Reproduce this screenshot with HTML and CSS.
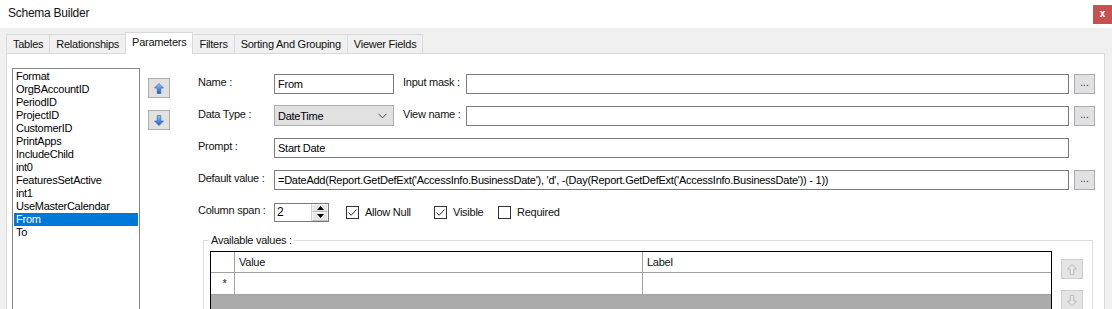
FILE: index.html
```html
<!DOCTYPE html>
<html lang="en">
  <head>
    <meta charset="UTF-8" />
    <title>Schema Builder</title>
    <link rel="stylesheet" href="styles.css">
  </head>
  <body>
    <div class="titlebar">
      <span class="title">Schema Builder</span>
      <div class="close">x</div>
    </div>

    <div class="window">
      <div class="tabs">
        <div class="tab">Tables</div>
        <div class="tab">Relationships</div>
        <div class="tab active">Parameters</div>
        <div class="tab">Filters</div>
        <div class="tab">Sorting And Grouping</div>
        <div class="tab">Viewer Fields</div>
      </div>

      <div class="panel">
        <ul class="listbox">
          <li>Format</li>
          <li>OrgBAccountID</li>
          <li>PeriodID</li>
          <li>ProjectID</li>
          <li>CustomerID</li>
          <li>PrintApps</li>
          <li>IncludeChild</li>
          <li>int0</li>
          <li>FeaturesSetActive</li>
          <li>int1</li>
          <li>UseMasterCalendar</li>
          <li class="selected">From</li>
          <li>To</li>
        </ul>

        <div class="move-buttons">
          <div class="icon-btn">
            <svg width="10" height="11" viewBox="0 0 10 11">
              <defs>
                <linearGradient id="blueUp" x1="0" y1="0" x2="0" y2="1">
                  <stop offset="0" stop-color="#8fc3f5" />
                  <stop offset="1" stop-color="#1f5fc4" />
                </linearGradient>
              </defs>
              <polygon points="5,0.5 9.5,5 6.8,5 6.8,10.5 3.2,10.5 3.2,5 0.5,5" fill="url(#blueUp)" stroke="#2a5fae" stroke-width="0.6" />
            </svg>
          </div>
          <div class="icon-btn">
            <svg width="10" height="11" viewBox="0 0 10 11">
              <defs>
                <linearGradient id="blueDown" x1="0" y1="0" x2="0" y2="1">
                  <stop offset="0" stop-color="#8fc3f5" />
                  <stop offset="1" stop-color="#1f5fc4" />
                </linearGradient>
              </defs>
              <polygon points="3.2,0.5 6.8,0.5 6.8,6 9.5,6 5,10.5 0.5,6 3.2,6" fill="url(#blueDown)" stroke="#2a5fae" stroke-width="0.6" />
            </svg>
          </div>
        </div>

        <div class="form">
          <div class="row">
            <span class="lbl">Name :</span>
            <div class="field short">From</div>
            <span class="lbl2">Input mask :</span>
            <div class="field grow"></div>
            <div class="dots">...</div>
          </div>

          <div class="row">
            <span class="lbl">Data Type :</span>
            <div class="select">
              <span>DateTime</span>
              <svg width="9" height="6" viewBox="0 0 9 6"><polyline points="0.5,0.8 4.5,4.8 8.5,0.8" fill="none" stroke="#444" stroke-width="1" /></svg>
            </div>
            <span class="lbl2">View name :</span>
            <div class="field grow"></div>
            <div class="dots">...</div>
          </div>

          <div class="row">
            <span class="lbl">Prompt :</span>
            <div class="field grow wide">Start Date</div>
          </div>

          <div class="row">
            <span class="lbl">Default value :</span>
            <div class="field grow">=DateAdd(Report.GetDefExt('AccessInfo.BusinessDate'), 'd', -(Day(Report.GetDefExt('AccessInfo.BusinessDate')) - 1))</div>
            <div class="dots">...</div>
          </div>

          <div class="row">
            <span class="lbl">Column span :</span>
            <div class="spinner">
              <span class="spin-value">2</span>
              <div class="spin-buttons">
                <div class="spin-half"><svg width="7" height="4" viewBox="0 0 7 4"><polygon points="3.5,0 7,4 0,4" fill="#000" /></svg></div>
                <div class="spin-half"><svg width="7" height="4" viewBox="0 0 7 4"><polygon points="0,0 7,0 3.5,4" fill="#000" /></svg></div>
              </div>
            </div>
            <label class="check allow-null">
              <span class="box"><svg width="11" height="11" viewBox="0 0 11 11"><polyline points="1.5,5.5 4.2,8.2 9.5,2.5" fill="none" stroke="#222" stroke-width="1" /></svg></span>
              Allow Null
            </label>
            <label class="check visible">
              <span class="box"><svg width="11" height="11" viewBox="0 0 11 11"><polyline points="1.5,5.5 4.2,8.2 9.5,2.5" fill="none" stroke="#222" stroke-width="1" /></svg></span>
              Visible
            </label>
            <label class="check">
              <span class="box"></span>
              Required
            </label>
          </div>

          <fieldset class="group">
            <legend>Available values :</legend>
            <div class="group-body">
              <div class="grid">
                <div class="grid-row head">
                  <div class="cell rowhead"></div>
                  <div class="cell value">Value</div>
                  <div class="cell label">Label</div>
                </div>
                <div class="grid-row">
                  <div class="cell rowhead"><span class="star">*</span></div>
                  <div class="cell value"></div>
                  <div class="cell label"></div>
                </div>
              </div>
              <div class="side-buttons">
                <div class="icon-btn disabled">
                  <svg width="10" height="11" viewBox="0 0 10 11"><polygon points="5,0.5 9.5,5 6.8,5 6.8,10.5 3.2,10.5 3.2,5 0.5,5" fill="#e8e8e8" stroke="#a8a8a8" stroke-width="0.7" /></svg>
                </div>
                <div class="icon-btn disabled">
                  <svg width="10" height="11" viewBox="0 0 10 11"><polygon points="3.2,0.5 6.8,0.5 6.8,6 9.5,6 5,10.5 0.5,6 3.2,6" fill="#e8e8e8" stroke="#a8a8a8" stroke-width="0.7" /></svg>
                </div>
              </div>
            </div>
          </fieldset>
        </div>
      </div>
    </div>
  </body>
</html>
```

FILE: styles.css
```css
body {
  margin: 0;
  background-color: #f0f0f0;
  color: #000;
  font-family: "Liberation Sans", Arial, sans-serif;
  font-size: 11px;
  letter-spacing: -0.25px;
  height: 309px;
  overflow: hidden;
}

.titlebar {
  height: 28px;
  background: #fff;
  display: flex;
  justify-content: space-between;
  align-items: flex-start;
}

.title {
  font-size: 12px;
  line-height: 15px;
  padding: 6px 0 0 8px;
  color: #111;
}

.close {
  width: 19px;
  height: 19px;
  margin-top: 5px;
  background: #c75050;
  color: #fff;
  font-family: "DejaVu Sans Mono", monospace;
  font-weight: bold;
  font-size: 10px;
  line-height: 18px;
  text-align: center;
  letter-spacing: 0;
}

.window {
  padding: 4px 7px 0 6px;
}

.tabs {
  display: flex;
  align-items: flex-end;
  height: 21px;
}

.tab {
  height: 18px;
  line-height: 19px;
  padding: 0 6px;
  border: 1px solid #d9d9d9;
  border-bottom: 0;
  margin-left: -1px;
  background: #f0f0f0;
  color: #111;
}

.tab:first-child {
  margin-left: 0;
}

.tab.active {
  height: 21px;
  line-height: 18px;
  background: #fff;
  position: relative;
  z-index: 1;
  margin-bottom: -1px;
}

.panel {
  background: #fff;
  border: 1px solid #d9d9d9;
  height: 300px;
  display: flex;
  align-items: flex-start;
}

.listbox {
  list-style: none;
  width: 126px;
  height: 260px;
  margin: 14px 0 0 5px;
  padding: 1px 0;
  border: 1px solid #828790;
}

.listbox li {
  height: 13px;
  line-height: 13px;
  margin: 0 1px;
  padding-left: 2px;
}

.listbox li.selected {
  background: #0078d7;
  color: #fff;
}

.move-buttons {
  display: flex;
  flex-direction: column;
  gap: 12px;
  margin: 24px 0 0 8px;
}

.icon-btn {
  width: 20px;
  height: 18px;
  background: #e1e1e1;
  border: 1px solid #adadad;
  display: flex;
  align-items: center;
  justify-content: center;
}

.icon-btn.disabled {
  background: #e4e4e4;
  border-color: #cdcdcd;
}

.form {
  width: 897px;
  margin: 20px 0 0 28px;
}

.row {
  display: flex;
  align-items: center;
  height: 20px;
  margin-bottom: 12px;
}

.lbl {
  width: 76px;
  flex: none;
  align-self: flex-start;
  line-height: 13px;
  padding-top: 2px;
  color: #111;
}

.lbl2 {
  width: 63px;
  flex: none;
  margin-left: 9px;
  align-self: flex-start;
  line-height: 13px;
  padding-top: 2px;
  color: #111;
}

.field {
  height: 20px;
  box-sizing: border-box;
  border: 1px solid #7a7a7a;
  background: #fff;
  padding: 0 3px;
  line-height: 18px;
  white-space: nowrap;
  overflow: hidden;
}

.field.short {
  width: 120px;
  flex: none;
}

.field.grow {
  flex: 1;
}

.field.wide {
  margin-right: 26px;
}

.dots {
  width: 21px;
  height: 20px;
  box-sizing: border-box;
  margin-left: 5px;
  background: #e1e1e1;
  border: 1px solid #adadad;
  text-align: center;
  line-height: 16px;
  font-size: 10px;
  letter-spacing: 0;
  color: #302060;
}

.select {
  width: 120px;
  height: 21px;
  box-sizing: border-box;
  flex: none;
  background: #e1e1e1;
  border: 1px solid #adadad;
  display: flex;
  align-items: center;
  justify-content: space-between;
  padding: 0 6px 0 3px;
  margin-top: -1px;
}

.spinner {
  width: 55px;
  height: 19px;
  box-sizing: border-box;
  border: 1px solid #7a7a7a;
  display: flex;
  justify-content: space-between;
}

.spin-value {
  padding-left: 2px;
  line-height: 17px;
  font-size: 12px;
}

.spin-buttons {
  width: 16px;
  display: flex;
  flex-direction: column;
  border-left: 1px solid #d0d0d0;
}

.spin-half {
  flex: 1;
  background: #e6e6e6;
  border: 1px solid #f4f4f4;
  border-bottom-color: #bcbcbc;
  display: flex;
  align-items: center;
  justify-content: center;
}

.check {
  display: flex;
  align-items: center;
  gap: 6px;
  color: #111;
}

.check.allow-null {
  width: 88px;
  margin-left: 17px;
}

.check.visible {
  width: 64px;
}

.box {
  width: 13px;
  height: 13px;
  box-sizing: border-box;
  border: 1px solid #333;
  background: #fff;
  display: flex;
  align-items: center;
  justify-content: center;
}

.group {
  width: 890px;
  box-sizing: border-box;
  margin: 12px 0 0 5px;
  padding: 0;
  border: 1px solid #dcdcdc;
}

.group legend {
  margin-left: 5px;
  padding: 0 2px;
  line-height: 13px;
  color: #111;
}

.group-body {
  display: flex;
  gap: 9px;
  padding: 4px 0 0 6px;
}

.grid {
  width: 842px;
  height: 80px;
  box-sizing: border-box;
  border: 1px solid #000;
  background: #ababab;
}

.grid-row {
  display: flex;
  height: 21px;
  background: #fff;
  border-bottom: 1px solid #a0a0a0;
}

.grid-row.head {
  height: 20px;
}

.cell {
  border-right: 1px solid #a0a0a0;
  line-height: 20px;
  padding-left: 4px;
  color: #111;
}

.cell.rowhead {
  width: 19px;
  flex: none;
  text-align: center;
  padding: 0 0 0 4px;
}

.cell.value {
  width: 403px;
  flex: none;
}

.cell.label {
  flex: 1;
  border-right: 0;
}

.star {
  color: #555;
  font-weight: bold;
  font-size: 10px;
}

.side-buttons {
  display: flex;
  flex-direction: column;
  gap: 11px;
  margin-top: 8px;
}
```
